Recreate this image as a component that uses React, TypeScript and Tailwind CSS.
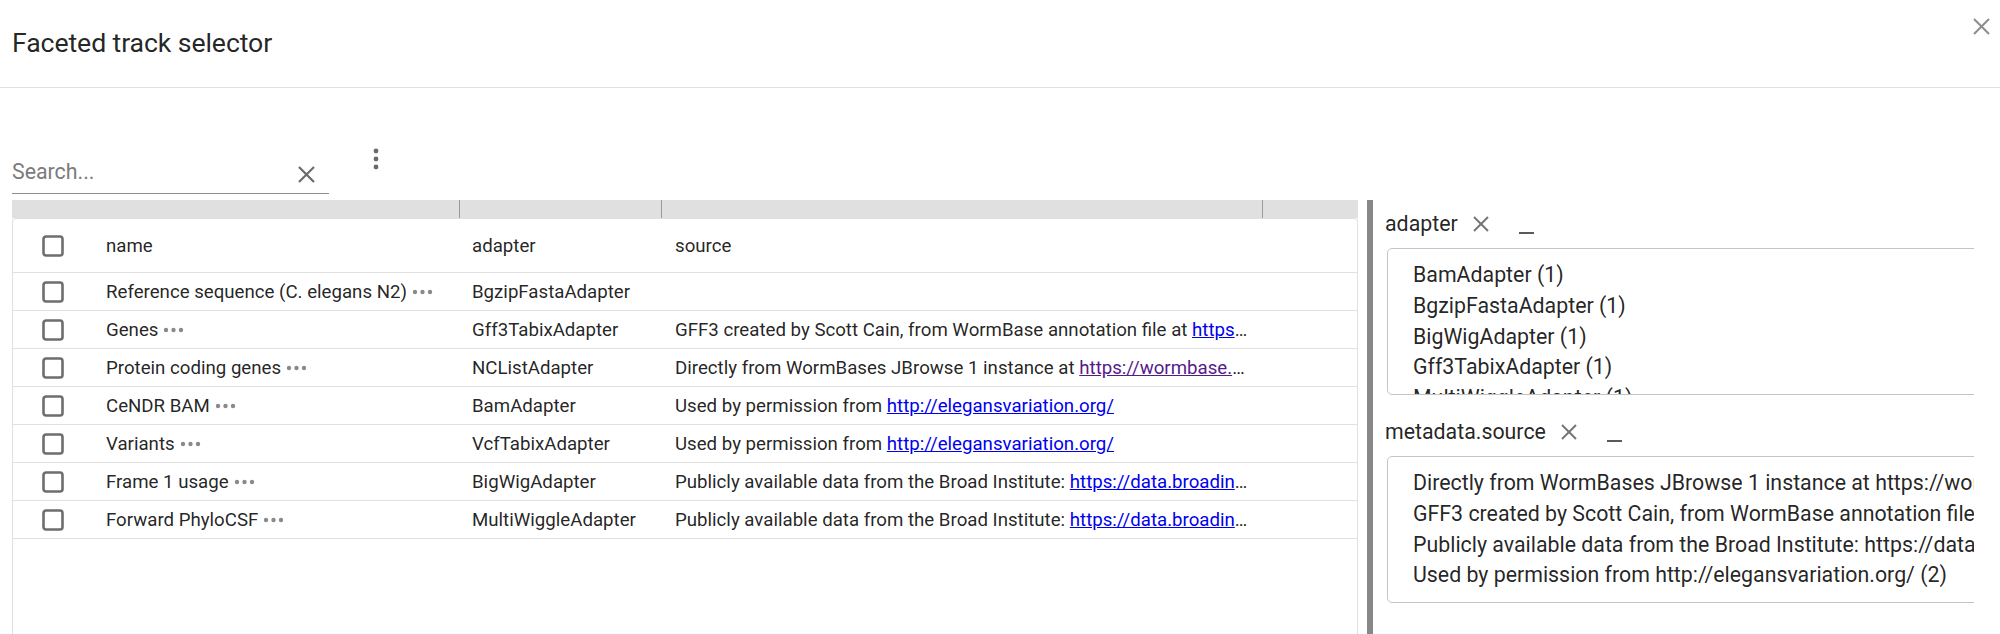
import React from "react";

function XIcon({ size = 16, color = "#757575", stroke = 2 }: { size?: number; color?: string; stroke?: number }) {
  return (
    <svg width={size} height={size} viewBox={`0 0 ${size} ${size}`} fill="none">
      <line x1={1} y1={1} x2={size - 1} y2={size - 1} stroke={color} strokeWidth={stroke} />
      <line x1={size - 1} y1={1} x2={1} y2={size - 1} stroke={color} strokeWidth={stroke} />
    </svg>
  );
}

function CheckBox() {
  return (
    <svg width="22" height="22" viewBox="0 0 22 22" fill="none" className="shrink-0">
      <rect x="1.5" y="1.5" width="19" height="19" rx="2.5" stroke="#6e6e6e" strokeWidth="2.6" />
    </svg>
  );
}

function Dots() {
  return (
    <svg width="21" height="6" viewBox="0 0 21 6" className="ml-[5px] shrink-0">
      <circle cx="3" cy="3" r="2.2" fill="#8a8a8a" />
      <circle cx="10.5" cy="3" r="2.2" fill="#8a8a8a" />
      <circle cx="18" cy="3" r="2.2" fill="#8a8a8a" />
    </svg>
  );
}

type Row = {
  name: string;
  adapter: string;
  text?: string;
  url?: string;
  visited?: boolean;
};

const rows: Row[] = [
  { name: "Reference sequence (C. elegans N2)", adapter: "BgzipFastaAdapter" },
  {
    name: "Genes",
    adapter: "Gff3TabixAdapter",
    text: "GFF3 created by Scott Cain, from WormBase annotation file at ",
    url: "https://ftp.ebi.ac.uk/pub/databases/wormbase/releases/WS267/species/c_elegans/PRJNA13758/c_elegans.PRJNA13758.WS267.annotations.gff3.gz",
  },
  {
    name: "Protein coding genes",
    adapter: "NCListAdapter",
    text: "Directly from WormBases JBrowse 1 instance at ",
    url: "https://wormbase.org/tools/genome/jbrowse-simple/?data=data%2Fc_elegans_PRJNA13758",
    visited: true,
  },
  {
    name: "CeNDR BAM",
    adapter: "BamAdapter",
    text: "Used by permission from ",
    url: "http://elegansvariation.org/",
  },
  {
    name: "Variants",
    adapter: "VcfTabixAdapter",
    text: "Used by permission from ",
    url: "http://elegansvariation.org/",
  },
  {
    name: "Frame 1 usage",
    adapter: "BigWigAdapter",
    text: "Publicly available data from the Broad Institute: ",
    url: "https://data.broadinstitute.org/compbio1/PhyloCSFtracks/ce11/",
  },
  {
    name: "Forward PhyloCSF",
    adapter: "MultiWiggleAdapter",
    text: "Publicly available data from the Broad Institute: ",
    url: "https://data.broadinstitute.org/compbio1/PhyloCSFtracks/ce11/",
  },
];

const adapterFacet = [
  "BamAdapter (1)",
  "BgzipFastaAdapter (1)",
  "BigWigAdapter (1)",
  "Gff3TabixAdapter (1)",
  "MultiWiggleAdapter (1)",
  "NCListAdapter (1)",
  "VcfTabixAdapter (1)",
];

const sourceFacet = [
  "Directly from WormBases JBrowse 1 instance at https://wormbase.org/tools/genome/jbrowse-simple/?data=data%2Fc_elegans_PRJNA13758 (1)",
  "GFF3 created by Scott Cain, from WormBase annotation file at https://ftp.ebi.ac.uk/pub/databases/wormbase/releases/WS267 (1)",
  "Publicly available data from the Broad Institute: https://data.broadinstitute.org/compbio1/PhyloCSFtracks/ce11/ (2)",
  "Used by permission from http://elegansvariation.org/ (2)",
];

function Facet({ label, items }: { label: string; items: string[] }) {
  return (
    <div className="flex flex-col">
      <div className="h-[48px] flex items-center text-[21.33px] text-[rgba(0,0,0,0.87)]">
        <span>{label}</span>
        <button className="ml-[8px] w-[30px] h-[30px] flex items-center justify-center">
          <XIcon size={16} color="#757575" stroke={2} />
        </button>
        <button className="ml-[16px] w-[30px] h-[30px] flex items-end justify-center pb-[5px]">
          <span className="block w-[15px] h-[2px] bg-[#5a5a5a]" />
        </button>
      </div>
      <div className="ml-[2px] h-[147px] w-[720px] border border-[#c4c4c4] rounded-[5px] overflow-hidden pt-[11px] pl-[25px] text-[21.33px] leading-[30.8px] whitespace-nowrap text-[rgba(0,0,0,0.87)]">
        {items.map((it) => (
          <div key={it}>{it}</div>
        ))}
      </div>
    </div>
  );
}

export default function App() {
  return (
    <div className="w-[2000px] h-[634px] overflow-hidden bg-white flex flex-col relative font-[Roboto,Arial,sans-serif]">
      {/* Header */}
      <div className="h-[88px] shrink-0 border-b border-[#e0e0e0] flex items-center pl-[12px] pb-[2px]">
        <h2 className="text-[26.67px] font-normal text-[rgba(0,0,0,0.87)] tracking-[-0.1px]">Faceted track selector</h2>
      </div>
      <button className="absolute left-[1963px] top-[8px] w-[36px] h-[36px] flex items-center justify-center">
        <XIcon size={17} color="#8c8c8c" stroke={2} />
      </button>

      {/* Body */}
      <div className="flex-1 min-h-0 flex flex-col pl-[12px] pr-[26px]">
        {/* Search row */}
        <div className="flex items-start pt-[51px] shrink-0">
          <div className="mt-[11px] w-[317px] h-[44px] border-b border-[#8f8f8f] flex items-center justify-between">
            <span className="text-[21.33px] text-[#7b7b7b]">Search...</span>
            <span className="mr-[14px] mt-[6px]">
              <XIcon size={17} color="#6a6a6a" stroke={2.2} />
            </span>
          </div>
          <button className="ml-[27px] w-[40px] h-[40px] flex items-center justify-center">
            <svg width="6" height="22" viewBox="0 0 6 22">
              <circle cx="3" cy="3" r="2.4" fill="#6a6a6a" />
              <circle cx="3" cy="11" r="2.4" fill="#6a6a6a" />
              <circle cx="3" cy="19" r="2.4" fill="#6a6a6a" />
            </svg>
          </button>
        </div>

        {/* Main */}
        <div className="mt-[6px] flex-1 min-h-0 flex">
          {/* Table */}
          <div className="w-[1346px] shrink-0 flex flex-col">
            <div className="h-[18px] shrink-0 bg-[#e0e0e0] grid grid-cols-[448px_202px_601px_1fr]">
              <div className="border-r border-[#9a9a9a]" />
              <div className="border-r border-[#9a9a9a]" />
              <div className="border-r border-[#9a9a9a]" />
              <div />
            </div>
            <div className="flex-1 min-h-0 border border-b-0 border-[#e0e0e0] rounded-t-[4px] overflow-hidden text-[18.67px] text-[rgba(0,0,0,0.87)]">
              <div className="grid grid-cols-[447px_202px_601px_1fr] h-[54px] border-b border-[#e0e0e0] items-center">
                <div className="flex items-center pl-[29px]">
                  <CheckBox />
                  <span className="ml-[42px]">name</span>
                </div>
                <div className="pl-[12px]">adapter</div>
                <div className="pl-[13px]">source</div>
                <div />
              </div>
              {rows.map((r) => (
                <div
                  key={r.name}
                  className="grid grid-cols-[447px_202px_601px_1fr] h-[38px] border-b border-[#e0e0e0] items-center"
                >
                  <div className="flex items-center pl-[29px] min-w-0">
                    <CheckBox />
                    <span className="ml-[42px] whitespace-nowrap">{r.name}</span>
                    <Dots />
                  </div>
                  <div className="pl-[12px] whitespace-nowrap">{r.adapter}</div>
                  <div className="pl-[13px] pr-[13px] truncate">
                    {r.text ? (
                      <>
                        {r.text}
                        <a
                          href="#"
                          className={`underline ${r.visited ? "text-[#551a8b]" : "text-[#0000ee]"}`}
                        >
                          {r.url}
                        </a>
                      </>
                    ) : null}
                  </div>
                  <div />
                </div>
              ))}
            </div>
          </div>

          {/* Resize bar */}
          <div className="ml-[9px] w-[6px] shrink-0 bg-[#888888]" />

          {/* Facets */}
          <div className="ml-[12px] flex-1 min-w-0 overflow-hidden flex flex-col gap-[13px]">
            <Facet label="adapter" items={adapterFacet} />
            <Facet label="metadata.source" items={sourceFacet} />
          </div>
        </div>
      </div>
    </div>
  );
}
